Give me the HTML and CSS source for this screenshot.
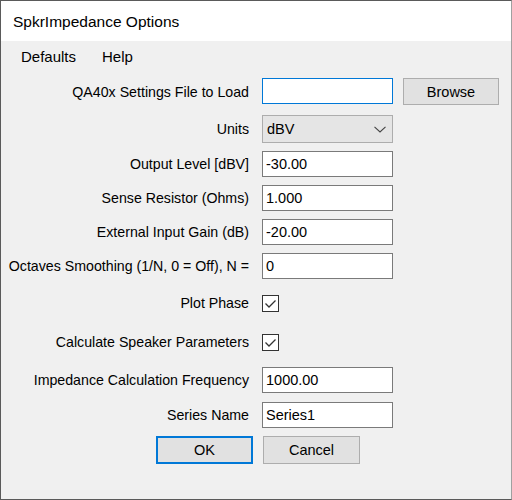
FILE: index.html
```html
<!DOCTYPE html>
<html>
<head>
<meta charset="utf-8">
<link rel="stylesheet" href="styles.css">
</head>
<body>
<div class="window">
  <div class="titlebar">SpkrImpedance Options</div>
  <div class="menubar">
    <span class="menu-item">Defaults</span>
    <span class="menu-item">Help</span>
  </div>
  <div class="form">
    <div class="row row-first">
      <div class="label">QA40x Settings File to Load</div>
      <div class="textbox focused"></div>
      <div class="button browse">Browse</div>
    </div>
    <div class="row row-combo">
      <div class="label">Units</div>
      <div class="combo">
        <span>dBV</span>
        <svg class="chev" width="12" height="7" viewBox="0 0 12 7"><path d="M0.5 0.8 L6 6 L11.5 0.8" fill="none" stroke="#444" stroke-width="1.1"/></svg>
      </div>
    </div>
    <div class="row">
      <div class="label">Output Level [dBV]</div>
      <div class="textbox">-30.00</div>
    </div>
    <div class="row">
      <div class="label">Sense Resistor (Ohms)</div>
      <div class="textbox">1.000</div>
    </div>
    <div class="row">
      <div class="label">External Input Gain (dB)</div>
      <div class="textbox">-20.00</div>
    </div>
    <div class="row">
      <div class="label">Octaves Smoothing (1/N, 0 = Off), N =</div>
      <div class="textbox">0</div>
    </div>
    <div class="row row-check1">
      <div class="label">Plot Phase</div>
      <div class="checkbox"><svg width="17" height="17" viewBox="0 0 17 17"><path d="M3.5 8.5 L7 12 L13.5 5.5" fill="none" stroke="#333" stroke-width="1.3"/></svg></div>
    </div>
    <div class="row row-check2">
      <div class="label">Calculate Speaker Parameters</div>
      <div class="checkbox"><svg width="17" height="17" viewBox="0 0 17 17"><path d="M3.5 8.5 L7 12 L13.5 5.5" fill="none" stroke="#333" stroke-width="1.3"/></svg></div>
    </div>
    <div class="row row-freq">
      <div class="label">Impedance Calculation Frequency</div>
      <div class="textbox">1000.00</div>
    </div>
    <div class="row row-series">
      <div class="label">Series Name</div>
      <div class="textbox">Series1</div>
    </div>
    <div class="buttons">
      <div class="button ok">OK</div>
      <div class="button cancel">Cancel</div>
    </div>
  </div>
</div>
</body>
</html>
```
FILE: styles.css
```css
html, body {
  margin: 0;
  padding: 0;
  width: 512px;
  height: 500px;
  overflow: hidden;
}
body {
  font-family: "Liberation Sans", Arial, sans-serif;
  font-size: 14.2px;
  color: #000;
}
.window {
  box-sizing: border-box;
  width: 512px;
  height: 500px;
  border: 1px solid #5a5a5a;
  border-right-color: #a0a0a0;
  background: #f0f0f0;
  display: flex;
  flex-direction: column;
}
.titlebar {
  height: 40px;
  background: #fff;
  font-size: 15.5px;
  line-height: 41px;
  padding-left: 11px;
  border-left: 1px solid #fff;
}
.menubar {
  height: 29px;
  display: flex;
  align-items: center;
  padding-left: 20px;
  gap: 26px;
  font-size: 15px;
  margin-top: 1px;
}
.form {
  padding-top: 7px;
  display: flex;
  flex-direction: column;
}
.row {
  display: flex;
  align-items: center;
  height: 26px;
  margin-top: 8px;
}
.row-first { margin-top: 0; height: 27px; }
.row-combo { margin-top: 10px; height: 28px; }
.row-check1 { margin-top: 11px; }
.row-check2 { margin-top: 13px; }
.row-freq { margin-top: 12px; }
.row-series { margin-top: 9px; }
.label {
  width: 248px;
  text-align: right;
  white-space: nowrap;
  margin-right: 13px;
}
.textbox {
  box-sizing: border-box;
  width: 131px;
  height: 26px;
  background: #fff;
  border: 1px solid #7a7a7a;
  padding-left: 3px;
  line-height: 24px;
  font-size: 14.5px;
}
.textbox.focused {
  border-color: #0078d7;
  align-self: flex-start;
}
.combo {
  box-sizing: border-box;
  width: 131px;
  height: 28px;
  background: #e5e5e5;
  border: 1px solid #adadad;
  padding-left: 4px;
  padding-right: 6px;
  display: flex;
  align-items: center;
  justify-content: space-between;
  font-size: 14.5px;
}
.chev { display: block; }
.button {
  box-sizing: border-box;
  background: #e1e1e1;
  border: 1px solid #adadad;
  display: flex;
  align-items: center;
  justify-content: center;
  font-size: 14.5px;
}
.browse {
  width: 96px;
  height: 27px;
  margin-left: 10px;
  align-self: flex-end;
}
.checkbox {
  box-sizing: border-box;
  width: 17px;
  height: 17px;
  border: 1px solid #333;
  background: #fff;
  position: relative;
}
.checkbox svg {
  position: absolute;
  left: -1px;
  top: -1px;
}
.buttons {
  display: flex;
  margin-top: 8px;
  padding-left: 155px;
  gap: 10px;
}
.ok, .cancel {
  width: 97px;
  height: 28px;
}
.ok {
  border: 2px solid #0078d7;
}
```
